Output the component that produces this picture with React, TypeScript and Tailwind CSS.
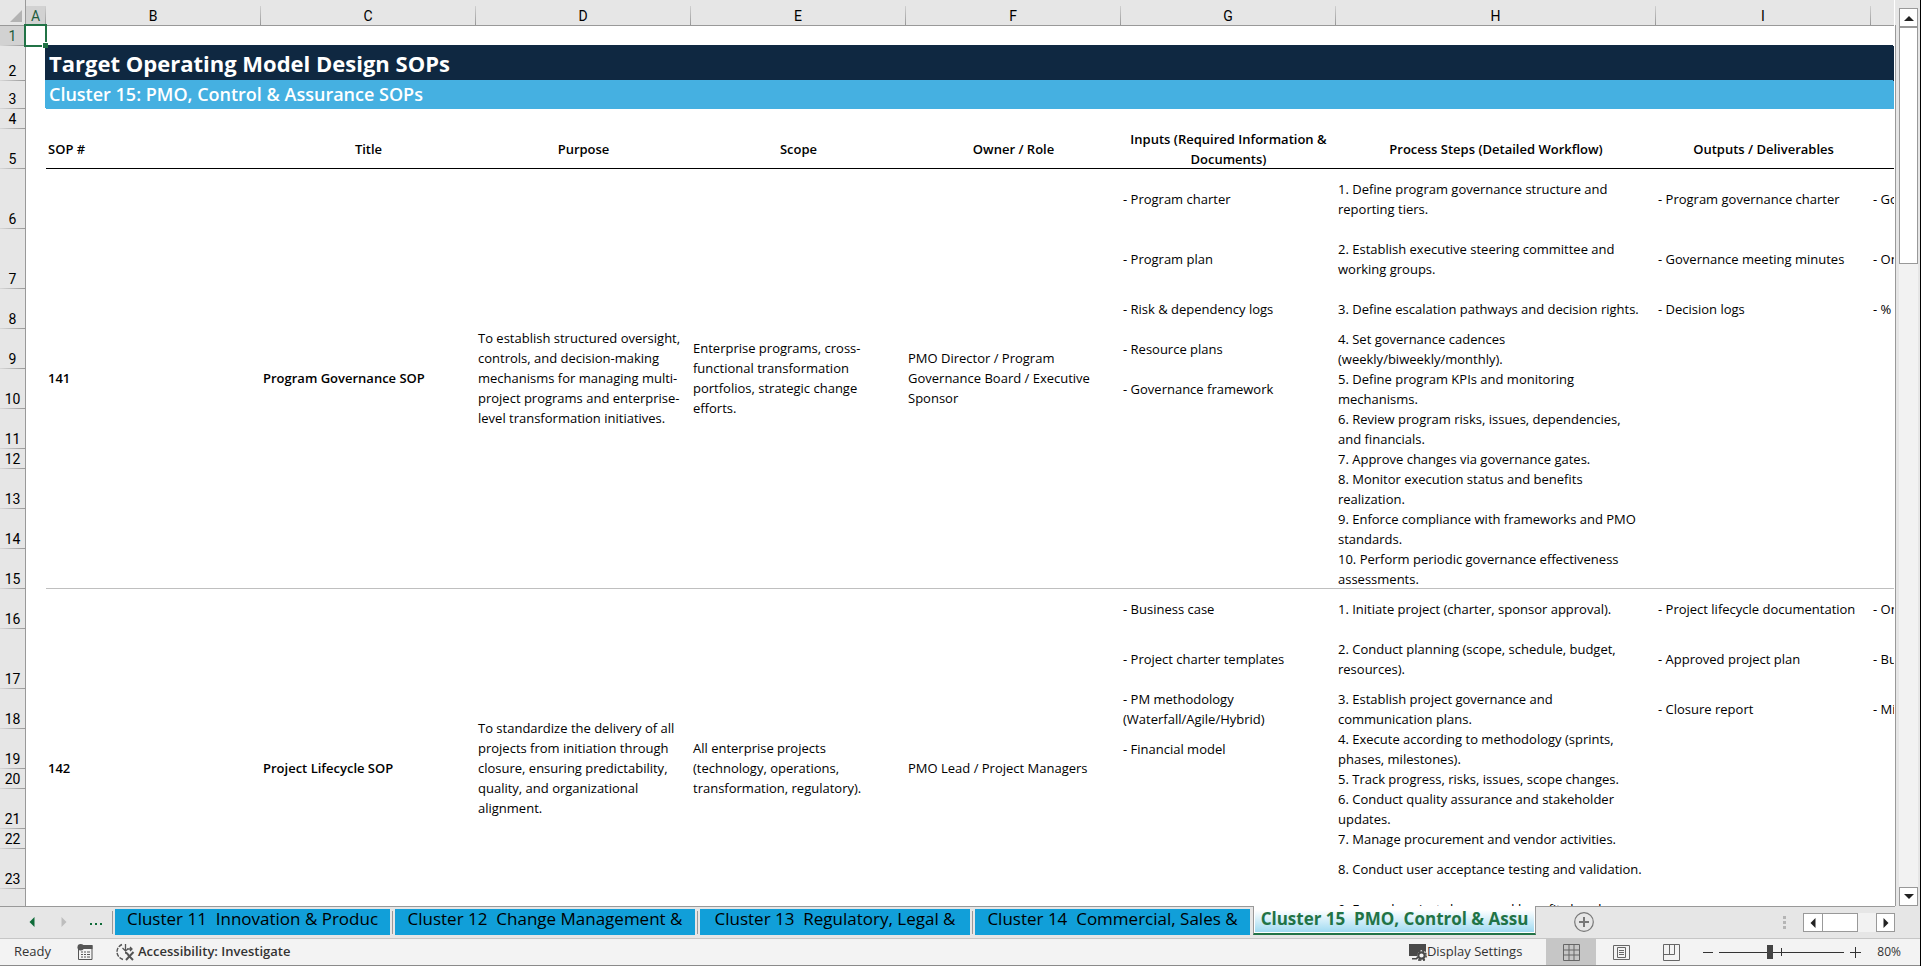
import React from "react";

type Sop = {
  id: string;
  title: string;
  purpose: string;
  scope: string;
  owner: string;
  rows: { h: string; input?: string; step?: string; output?: string; kpi?: string }[];
};

const columns = ["A", "B", "C", "D", "E", "F", "G", "H", "I", ""];

const headings = [
  "Title",
  "Purpose",
  "Scope",
  "Owner / Role",
  "Inputs (Required Information & Documents)",
  "Process Steps (Detailed Workflow)",
  "Outputs / Deliverables",
];

const sops: Sop[] = [
  {
    id: "141",
    title: "Program Governance SOP",
    purpose:
      "To establish structured oversight, controls, and decision-making mechanisms for managing multi-project programs and enterprise-level transformation initiatives.",
    scope: "Enterprise programs, cross-functional transformation portfolios, strategic change efforts.",
    owner: "PMO Director / Program Governance Board / Executive Sponsor",
    rows: [
      { h: "h-[60px]", input: "- Program charter", step: "1. Define program governance structure and reporting tiers.", output: "- Program governance charter", kpi: "- Go" },
      { h: "h-[60px]", input: "- Program plan", step: "2. Establish executive steering committee and working groups.", output: "- Governance meeting minutes", kpi: "- On" },
      { h: "h-10", input: "- Risk & dependency logs", step: "3. Define escalation pathways and decision rights.", output: "- Decision logs", kpi: "- %" },
      { h: "h-10", input: "- Resource plans", step: "4. Set governance cadences (weekly/biweekly/monthly)." },
      { h: "h-10", input: "- Governance framework", step: "5. Define program KPIs and monitoring mechanisms." },
      { h: "h-10", step: "6. Review program risks, issues, dependencies, and financials." },
      { h: "h-5", step: "7. Approve changes via governance gates." },
      { h: "h-10", step: "8. Monitor execution status and benefits realization." },
      { h: "h-10", step: "9. Enforce compliance with frameworks and PMO standards." },
      { h: "h-10", step: "10. Perform periodic governance effectiveness assessments." },
    ],
  },
  {
    id: "142",
    title: "Project Lifecycle SOP",
    purpose:
      "To standardize the delivery of all projects from initiation through closure, ensuring predictability, quality, and organizational alignment.",
    scope: "All enterprise projects (technology, operations, transformation, regulatory).",
    owner: "PMO Lead / Project Managers",
    rows: [
      { h: "h-10", input: "- Business case", step: "1. Initiate project (charter, sponsor approval).", output: "- Project lifecycle documentation", kpi: "- On" },
      { h: "h-[60px]", input: "- Project charter templates", step: "2. Conduct planning (scope, schedule, budget, resources).", output: "- Approved project plan", kpi: "- Bu" },
      { h: "h-10", input: "- PM methodology (Waterfall/Agile/Hybrid)", step: "3. Establish project governance and communication plans.", output: "- Closure report", kpi: "- Mi" },
      { h: "h-10", input: "- Financial model", step: "4. Execute according to methodology (sprints, phases, milestones)." },
      { h: "h-5", step: "5. Track progress, risks, issues, scope changes." },
      { h: "h-10", step: "6. Conduct quality assurance and stakeholder updates." },
      { h: "h-5", step: "7. Manage procurement and vendor activities." },
      { h: "h-10", step: "8. Conduct user acceptance testing and validation." },
      { h: "h-10", step: "9. Formal project closure and benefits handover." },
      { h: "h-5" },
    ],
  },
];

const tabs = [
  { name: "Cluster 11  Innovation & Produc", width: "w-[275px]" },
  { name: "Cluster 12  Change Management &", width: "w-[300px]" },
  { name: "Cluster 13  Regulatory, Legal &", width: "w-[270px]" },
  { name: "Cluster 14  Commercial, Sales &", width: "w-[275px]" },
];

function RowNumber({ n, active = false }: { n: number; active?: boolean }) {
  return (
    <th
      scope="row"
      className={`border-r border-[#999] p-0 align-bottom text-center font-[Roboto,sans-serif] text-sm leading-5 font-normal ${
        active ? "bg-[#d2d2d2] text-[#1f5c3d]" : "bg-[#e6e6e6] text-black"
      }`}
    >
      <div className="h-[19px]">{n}</div>
      <div className="h-px bg-linear-to-r from-[#d8d8d8] to-[#999]" />
    </th>
  );
}

function Sheet() {
  return (
    <table className="w-[1894px] table-fixed border-separate border-spacing-0 font-['Open_Sans',sans-serif] text-[13px] leading-5 text-black">
      <colgroup>
        <col className="w-[26px]" />
        <col className="w-5" />
        <col className="w-[215px]" />
        <col className="w-[215px]" />
        <col className="w-[215px]" />
        <col className="w-[215px]" />
        <col className="w-[215px]" />
        <col className="w-[215px]" />
        <col className="w-80" />
        <col className="w-[215px]" />
        <col />
      </colgroup>
      <thead>
        <tr className="h-[26px] bg-[#e6e6e6] font-[Roboto,sans-serif] text-sm">
          <th className="border-r border-b border-[#999] p-0">
            <svg viewBox="0 0 25 25" className="block size-[25px]">
              <path d="M22 10v12H10z" fill="#b3b3b3" />
            </svg>
          </th>
          {columns.map((col) => (
            <th
              key={col}
              scope="col"
              className={`border-b border-[#999] p-0 font-normal ${col === "A" ? "text-[#1f5c3d]" : ""}`}
            >
              <div className="flex h-[25px] items-end">
                <span className={`h-[19px] flex-1 leading-5 ${col === "A" ? "bg-[#d2d2d2]" : ""}`}>{col}</span>
                {col && <span className="h-[19px] w-px bg-linear-to-b from-[#d0d0d0] to-[#999]" />}
              </div>
            </th>
          ))}
        </tr>
      </thead>
      <tbody>
        <tr className="h-5">
          <RowNumber n={1} active />
          <td className="relative p-0">
            <div className="absolute -top-0.5 -left-0.5 z-10 h-[23px] w-[23px] border-2 border-[#217346]">
              <span className="absolute -right-[3px] -bottom-[3px] size-[6px] border-t border-l border-white bg-[#217346]" />
            </div>
          </td>
          <td colSpan={9} />
        </tr>
        <tr className="h-[35px]">
          <RowNumber n={2} />
          <td />
          <td
            colSpan={9}
            className="bg-[#0f2841] px-[3px] pt-0 pb-0.5 text-[22px] leading-8 font-bold text-white shadow-[-1px_-1px_0_#0f2841]"
          >
            Target Operating Model Design SOPs
          </td>
        </tr>
        <tr className="h-7">
          <RowNumber n={3} />
          <td />
          <td
            colSpan={9}
            className="bg-[#45b0e1] px-[3px] pt-0 pb-0.5 text-lg leading-[26px] font-semibold text-white shadow-[-1px_-1px_0_#45b0e1]"
          >
            Cluster 15: PMO, Control & Assurance SOPs
          </td>
        </tr>
        <tr className="h-5">
          <RowNumber n={4} />
          <td colSpan={10} />
        </tr>
        <tr className="h-10">
          <RowNumber n={5} />
          <td />
          <th scope="col" className="px-0.5 py-0 text-left font-semibold shadow-[inset_0_-1px_0_#000]">
            SOP #
          </th>
          {headings.map((h) => (
            <th key={h} scope="col" className="px-1 py-0 text-center font-semibold shadow-[inset_0_-1px_0_#000]">
              {h}
            </th>
          ))}
          <th className="shadow-[inset_0_-1px_0_#000]" />
        </tr>
        {sops.map((sop, s) =>
          sop.rows.map((row, i) => {
            const line = "shadow-[inset_0_-1px_0_#bfbfbf]";
            const last = i === sop.rows.length - 1 ? line : "";
            const merged = `pt-0 pr-1.5 pb-0.5 pl-0.5 ${line}`;
            return (
              <tr key={`${sop.id}-${i}`} className={row.h}>
                <RowNumber n={6 + s * 10 + i} />
                <td />
                {i === 0 && (
                  <>
                    <td rowSpan={sop.rows.length} className={`${merged} font-semibold`}>{sop.id}</td>
                    <td rowSpan={sop.rows.length} className={`${merged} font-semibold`}>{sop.title}</td>
                    <td rowSpan={sop.rows.length} className={merged}>{sop.purpose}</td>
                    <td rowSpan={sop.rows.length} className={merged}>{sop.scope}</td>
                    <td rowSpan={sop.rows.length} className={merged}>{sop.owner}</td>
                  </>
                )}
                <td className={`py-0 pr-1.5 pl-0.5 ${last}`}>{row.input}</td>
                <td className={`py-0 pr-3 pl-0.5 ${last}`}>{row.step}</td>
                <td className={`py-0 pl-0.5 whitespace-nowrap ${last}`}>{row.output}</td>
                <td className={`overflow-hidden py-0 pl-0.5 whitespace-nowrap ${last}`}>{row.kpi}</td>
              </tr>
            );
          })
        )}
      </tbody>
    </table>
  );
}

function Arrow({ dir, className = "" }: { dir: "up" | "down" | "left" | "right"; className?: string }) {
  const paths = {
    up: "M0 8 L5 3 L10 8z",
    down: "M0 2 L5 7 L10 2z",
    left: "M7.5 0 L2.5 5 L7.5 10z",
    right: "M2.5 0 L7.5 5 L2.5 10z",
  };
  return (
    <svg viewBox="0 0 10 10" className={`size-[10px] ${className}`} fill="currentColor">
      <path d={paths[dir]} />
    </svg>
  );
}

function VerticalScroll() {
  return (
    <aside className="flex w-[25px] shrink-0">
      <div className="mt-[25px] w-px bg-[#999]" />
      <div className="mt-2 mr-[2px] ml-[3px] flex flex-1 flex-col bg-[#f2f2f2]">
        <button aria-label="Scroll up" className="flex h-[19px] items-center justify-center border border-[#999] bg-white text-[#222]">
          <Arrow dir="up" />
        </button>
        <div className="flex-1">
          <div className="h-[27.5%] border border-[#999] bg-white" />
        </div>
        <button aria-label="Scroll down" className="flex h-[19px] items-center justify-center border border-[#999] bg-white text-[#222]">
          <Arrow dir="down" />
        </button>
      </div>
    </aside>
  );
}

function SheetTabs() {
  return (
    <div className="shrink-0 border-b border-[#c6c6c6] font-['Open_Sans',sans-serif] text-[17px]">
      <div className="mr-[25px] flex h-8 items-start border-t border-[#999]">
        <div className="flex h-[30px] w-28 shrink-0 items-center">
          <button aria-label="Previous sheets" className="ml-[27px] text-[#0e6b38]">
            <Arrow dir="left" />
          </button>
          <button aria-label="Next sheets" className="ml-[22px] text-[#bdbdbd]">
            <Arrow dir="right" />
          </button>
          <button aria-label="More sheets" className="ml-[21px] flex gap-[3px] pt-1">
            <span className="size-[2px] bg-[#0e6b38]" />
            <span className="size-[2px] bg-[#0e6b38]" />
            <span className="size-[2px] bg-[#0e6b38]" />
          </button>
        </div>
        {tabs.map((tab) => (
          <React.Fragment key={tab.name}>
            <span className="mt-1 mr-0.5 h-[23px] w-px shrink-0 bg-[#999]" />
            <button
              className={`mt-0.5 mr-0.5 h-[26px] shrink-0 bg-[#119fd9] pb-1.5 text-center leading-5 whitespace-pre text-black ${tab.width}`}
            >
              {tab.name}
            </button>
          </React.Fragment>
        ))}
        <button className="relative -mt-px ml-px flex h-[29px] w-[283px] shrink-0 flex-col border-x border-b-2 border-x-[#999] border-b-[#217346] bg-white px-px pb-px text-center font-bold whitespace-pre text-[#217346]">
          <span className="w-full flex-1 bg-linear-to-b from-white from-15% to-[#9fdaf1] pt-[3px] leading-5">
            Cluster 15  PMO, Control & Assu
          </span>
        </button>
        <button aria-label="New sheet" className="mt-[5px] ml-[38px] text-[#777]">
          <svg viewBox="0 0 20 20" className="size-5" fill="none" stroke="currentColor">
            <circle cx="10" cy="10" r="9.3" strokeWidth="1.2" />
            <path d="M10 5v10M5 10h10" strokeWidth="2" />
          </svg>
        </button>
        <div className="mt-[9px] mr-[17px] ml-auto flex flex-col gap-0.5">
          <span className="size-[3px] bg-[#b5b5b5]" />
          <span className="size-[3px] bg-[#b5b5b5]" />
          <span className="size-[3px] bg-[#b5b5b5]" />
        </div>
        <div className="mt-1.5 flex h-[19px] w-[92px] bg-[#f2f2f2]">
          <button aria-label="Scroll left" className="flex w-5 items-center justify-center border border-[#999] bg-white text-[#222]">
            <Arrow dir="left" />
          </button>
          <div className="-ml-px w-9 border border-[#999] bg-white" />
          <button aria-label="Scroll right" className="ml-auto flex w-[19px] items-center justify-center border border-[#999] bg-white text-[#222]">
            <Arrow dir="right" />
          </button>
        </div>
      </div>
    </div>
  );
}

function StatusBar() {
  return (
    <footer className="flex h-[27px] shrink-0 items-stretch border-b border-[#8a8a8a] bg-[#f3f3f3] font-['Open_Sans',sans-serif] text-xs text-[#333]">
      <span className="flex w-[77px] items-center pl-3.5 text-[13px]">Ready</span>
      <button aria-label="Record macro" className="flex w-[39px] items-center">
        <svg viewBox="0 0 16 16" className="size-4">
          <path d="M1.5 4.500v11h13.500v-14H6v3z" fill="#f3f3f3" stroke="#555" />
          <path d="M6 1h9.500v4H6z" fill="#555" />
          <circle cx="3.700" cy="3.200" r="3.200" fill="#555" />
          <path d="M4 8h2M7 8h2M10 8h3M4 10.500h2M7 10.500h2M10 10.500h3M4 13h2M7 13h2M10 13h3" stroke="#555" />
        </svg>
      </button>
      <button className="flex items-center gap-0.5 text-[13px] font-semibold">
        <svg viewBox="0 0 20 18" className="h-[18px] w-5" fill="none" stroke="#555">
          <path d="M6 1.500A8 8 0 0 0 1 8.500A8 8 0 0 0 7 16.500" strokeWidth="1.4" strokeDasharray="4 1.200" />
          <path d="M9.500 1v6M6.500 5l3 3 2.500-2M11 6h5M14 4l2 2-2 2" strokeWidth="1.300" />
          <path d="M9 9.500q2 0 4 3.500l4 4M17.500 9l-7.500 8" strokeWidth="2" />
        </svg>
        Accessibility: Investigate
      </button>
      <button className="mr-6 ml-auto flex items-center text-[13px]">
        <svg viewBox="0 0 19 18" className="h-[18px] w-[19px]">
          <path d="M1 1h17v8l-5-2-4 4v2H1zM4 15h5v1.500H4z" fill="#4a4a4a" />
          <circle cx="13.500" cy="12.500" r="3.200" fill="#f3f3f3" stroke="#4a4a4a" strokeWidth="2.200" />
          <circle cx="13.500" cy="12.500" r="4.700" fill="none" stroke="#4a4a4a" strokeWidth="1.500" strokeDasharray="2 1.700" />
          <path d="M11 16v2M16 16v2" stroke="#4a4a4a" strokeWidth="1.500" />
        </svg>
        Display Settings
      </button>
      <div className="flex">
        <button aria-label="Normal view" className="flex w-[50px] items-center justify-center bg-[#c6c6c6]">
          <svg viewBox="0 0 17 17" className="size-[17px]" fill="none" stroke="#666">
            <path d="M.5.5h16v16H.5zM.5 6h16M.5 11h16M6 .5v16M11 .5v16" />
          </svg>
        </button>
        <button aria-label="Page layout" className="flex w-[50px] items-center justify-center">
          <svg viewBox="0 0 17 17" className="size-[17px]" fill="none" stroke="#666">
            <path d="M.5 1.500h16v14H.5zM4.500 3.500h8v10h-8zM6 6.500h5M6 8.500h5M6 10.500h5" />
          </svg>
        </button>
        <button aria-label="Page break preview" className="flex w-[50px] items-center justify-center">
          <svg viewBox="0 0 17 17" className="size-[17px]" fill="none" stroke="#666">
            <path d="M.5.5h16v16H.5zM.5 10.500h11M6.500.5v10M11.500.5v10" />
          </svg>
        </button>
      </div>
      <div className="flex items-center pr-[19px] pl-[7px]">
        <button aria-label="Zoom out" className="h-px w-2.5 bg-[#333]" />
        <div className="relative mx-1.5 h-4 w-[125px]">
          <span className="absolute top-1 left-[62px] h-2 w-px bg-[#333]" />
          <input
            type="range"
            aria-label="Zoom"
            defaultValue={40}
            className="absolute inset-0 h-4 w-full appearance-none bg-transparent [&::-webkit-slider-runnable-track]:h-px [&::-webkit-slider-runnable-track]:bg-[#333] [&::-webkit-slider-thumb]:-mt-[7px] [&::-webkit-slider-thumb]:h-3.5 [&::-webkit-slider-thumb]:w-1.5 [&::-webkit-slider-thumb]:appearance-none [&::-webkit-slider-thumb]:bg-[#444]"
          />
        </div>
        <button aria-label="Zoom in">
          <svg viewBox="0 0 11 11" className="size-[11px]" stroke="#333">
            <path d="M5.500 0v11M0 5.500h11" />
          </svg>
        </button>
        <span className="ml-4">80%</span>
      </div>
    </footer>
  );
}

export default function App() {
  return (
    <div className="flex h-screen flex-col overflow-hidden border-r border-black bg-[#e6e6e6]">
      <div className="flex min-h-0 flex-1">
        <main className="min-w-0 flex-1 overflow-hidden bg-white">
          <Sheet />
        </main>
        <VerticalScroll />
      </div>
      <SheetTabs />
      <StatusBar />
    </div>
  );
}
